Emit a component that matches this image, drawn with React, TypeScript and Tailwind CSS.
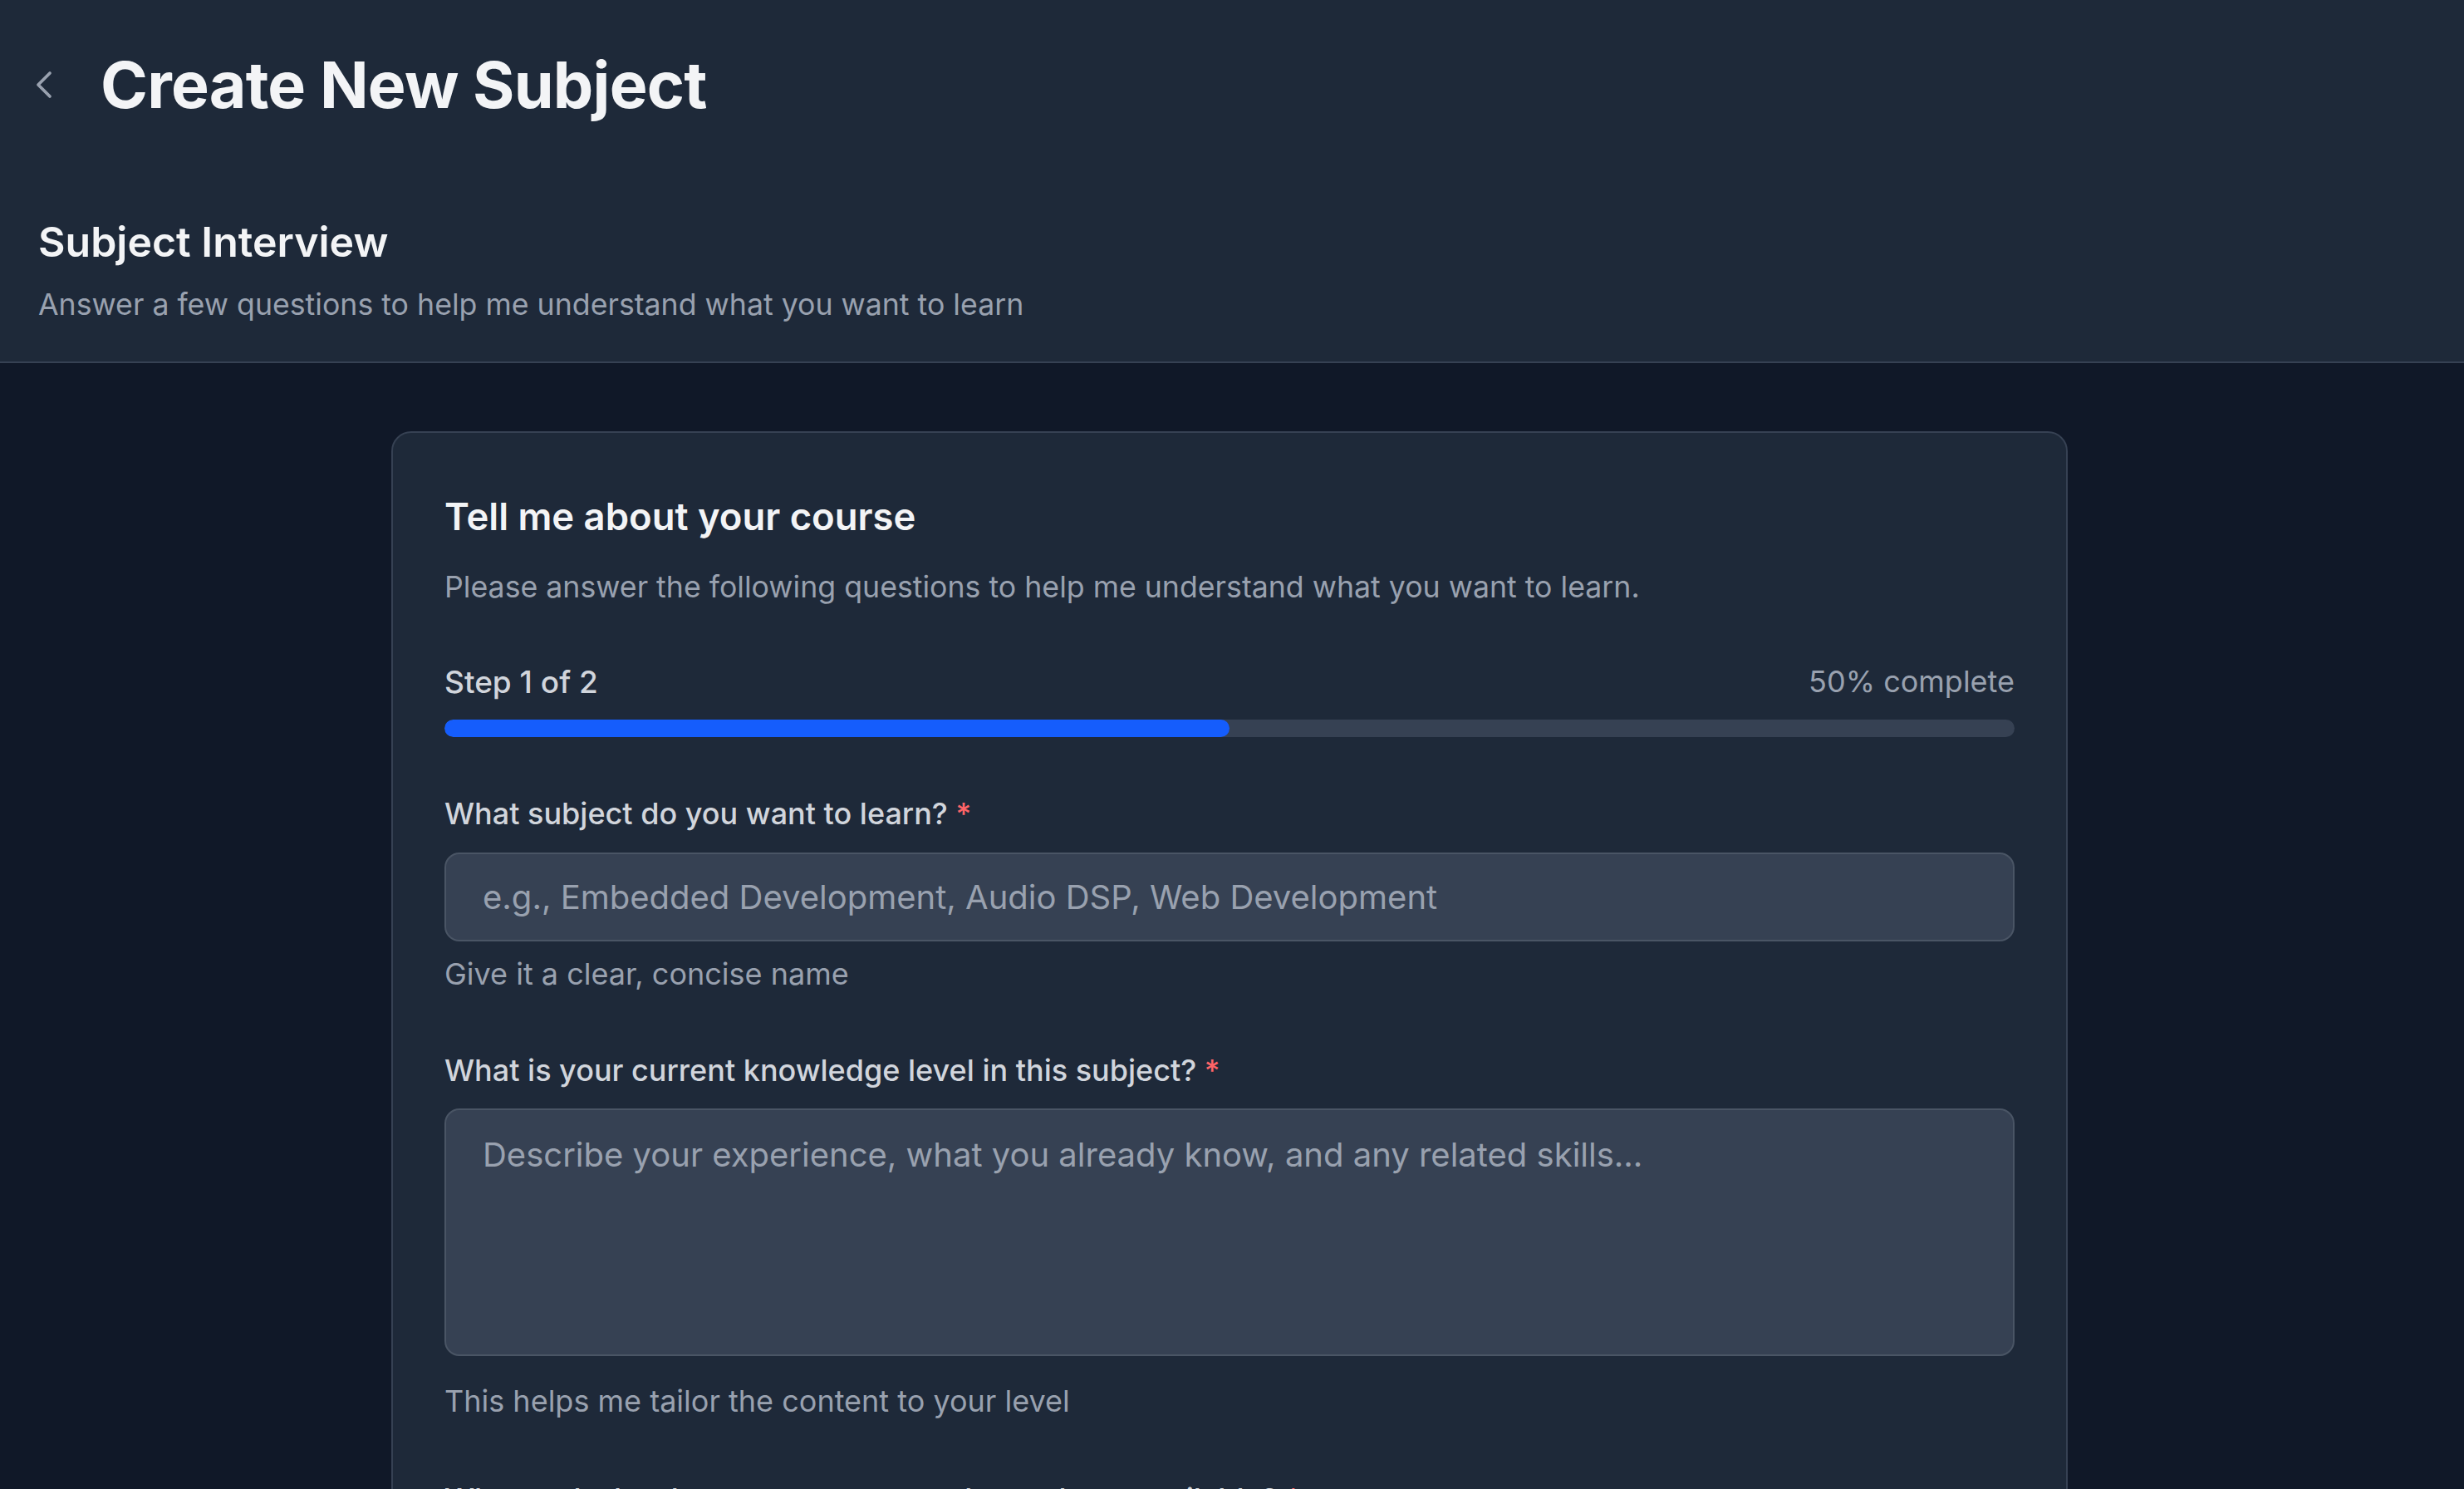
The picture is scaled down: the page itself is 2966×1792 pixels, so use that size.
import React from "react";

export default function App() {
  return (
    <div className="min-h-screen w-full bg-gray-900 font-['Inter',sans-serif] overflow-hidden">
      <header className="bg-gray-800 border-b-2 border-gray-700 pt-[42px] pb-[50px]">
        <div className="flex h-[120px] items-center pl-[25px]">
          <svg
            width="56"
            height="56"
            viewBox="0 0 24 24"
            fill="none"
            stroke="#99a1af"
            strokeWidth="1.6"
            strokeLinecap="round"
            strokeLinejoin="round"
          >
            <path d="m15 18-6-6 6-6" />
          </svg>
          <h1 className="ml-[40px] text-[77px] leading-none font-bold tracking-[-0.01em] text-gray-100">
            Create New Subject
          </h1>
        </div>
        <div className="pl-[46px] mt-[104px]">
          <h2 className="text-[50px] leading-none font-semibold text-gray-100">Subject Interview</h2>
          <p className="mt-[33px] text-[35.7px] leading-none text-gray-400">
            Answer a few questions to help me understand what you want to learn
          </p>
        </div>
      </header>

      <main className="pt-[82px] pr-[6px]">
        <div className="mx-auto w-[2018px] rounded-[24px] border-2 border-gray-700 bg-gray-800 px-[62px] pt-[78px] pb-[80px]">
          <h3 className="text-[45.4px] leading-none font-semibold text-gray-100">Tell me about your course</h3>
          <p className="mt-[45px] text-[35.7px] leading-none text-gray-400">
            Please answer the following questions to help me understand what you want to learn.
          </p>

          <div className="mt-[77px] flex items-center justify-between text-[36px] leading-none">
            <span className="text-[37px] font-medium text-gray-300">Step 1 of 2</span>
            <span className="text-gray-400">50% complete</span>
          </div>
          <div className="mt-[27px] h-[21px] w-full rounded-full bg-gray-700 overflow-hidden">
            <div className="h-full rounded-full bg-blue-600" style={{ width: "50%" }} />
          </div>

          <label className="mt-[74px] block text-[36px] leading-none font-medium text-gray-300">
            What subject do you want to learn? <span className="text-red-400">*</span>
          </label>
          <input
            type="text"
            placeholder="e.g., Embedded Development, Audio DSP, Web Development"
            className="mt-[29px] block h-[107px] w-full rounded-[18px] border-2 border-gray-600 bg-gray-700 px-[44px] text-[40px] text-gray-100 placeholder:text-gray-400 outline-none"
          />
          <p className="mt-[21px] text-[36px] leading-none text-gray-400">Give it a clear, concise name</p>

          <label className="mt-[80px] block text-[36px] leading-none font-medium text-gray-300">
            What is your current knowledge level in this subject? <span className="text-red-400">*</span>
          </label>
          <textarea
            placeholder="Describe your experience, what you already know, and any related skills..."
            className="mt-[28px] block h-[298px] w-full resize-none rounded-[18px] border-2 border-gray-600 bg-gray-700 px-[44px] pt-[34px] text-[40px] leading-none text-gray-100 placeholder:text-gray-400 outline-none"
          />
          <p className="mt-[36px] text-[36px] leading-none text-gray-400">
            This helps me tailor the content to your level
          </p>

          <label className="mt-[82px] block text-[36px] leading-none font-medium text-gray-300">
            What tools, hardware, or resources do you have available? <span className="text-red-400">*</span>
          </label>
          <textarea
            placeholder="List any tools, equipment, or resources you can use..."
            className="mt-[29px] block h-[298px] w-full resize-none rounded-[18px] border-2 border-gray-600 bg-gray-700 px-[44px] pt-[34px] text-[40px] leading-none text-gray-100 placeholder:text-gray-400 outline-none"
          />
        </div>
      </main>
    </div>
  );
}
